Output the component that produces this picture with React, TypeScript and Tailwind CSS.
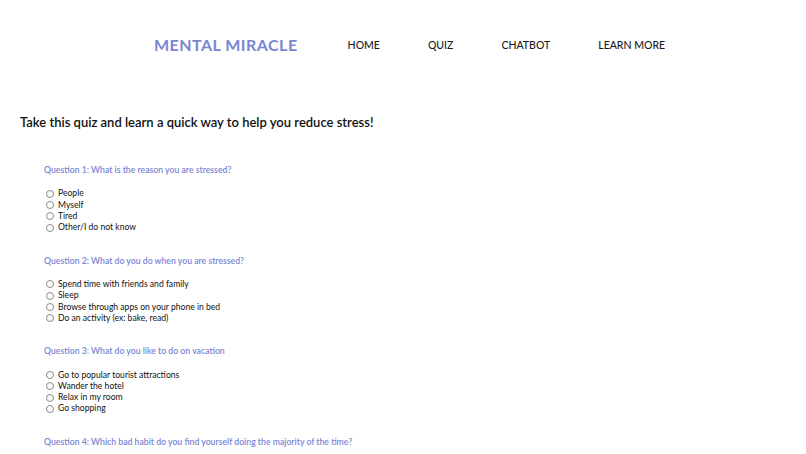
const questions = [
  {
    label: 'Question 1: What is the reason you are stressed?',
    options: ['People', 'Myself', 'Tired', 'Other/I do not know'],
  },
  {
    label: 'Question 2: What do you do when you are stressed?',
    options: [
      'Spend time with friends and family',
      'Sleep',
      'Browse through apps on your phone in bed',
      'Do an activity (ex: bake, read)',
    ],
  },
  {
    label: 'Question 3: What do you like to do on vacation',
    options: ['Go to popular tourist attractions', 'Wander the hotel', 'Relax in my room', 'Go shopping'],
  },
  {
    label: 'Question 4: Which bad habit do you find yourself doing the majority of the time?',
    options: [],
  },
];

function Radio() {
  return <span className="inline-block h-[8px] w-[8px] shrink-0 rounded-full border border-[#8a8a8a] bg-white" />;
}

export default function App() {
  return (
    <div className="h-[454px] w-[806px] overflow-hidden bg-white font-['Lato','Noto_Sans',sans-serif] text-[#111]">
      {/* header */}
      <header className="flex h-[90px] items-center justify-center pl-[13px]">
        <div className="text-[16px] font-bold tracking-[0.03em] text-[#7b85d4]">MENTAL MIRACLE</div>
        <nav className="ml-[50px] mt-[2px] flex gap-12 text-[10.5px] font-medium text-[#1a1a1a]">
          <a>HOME</a>
          <a>QUIZ</a>
          <a>CHATBOT</a>
          <a>LEARN MORE</a>
        </nav>
      </header>

      <h1 className="mt-[22px] pl-[20px] text-[13px] leading-[20px] font-semibold">
        Take this quiz and learn a quick way to help you reduce stress!
      </h1>

      <div className="mt-[32px] pl-[44px]">
        {questions.map((q) => (
          <div key={q.label} className="mb-[21.33px]">
            <p className="text-[8.7px] leading-[12px] font-semibold text-[#7b85d4]">{q.label}</p>
            {q.options.length > 0 && (
              <ul className="mt-[12px] pl-[2px]">
                {q.options.map((o) => (
                  <li key={o} className="flex h-[11.33px] items-center gap-[4px] text-[8.6px]">
                    <Radio />
                    <span>{o}</span>
                  </li>
                ))}
              </ul>
            )}
          </div>
        ))}
      </div>
    </div>
  );
}
